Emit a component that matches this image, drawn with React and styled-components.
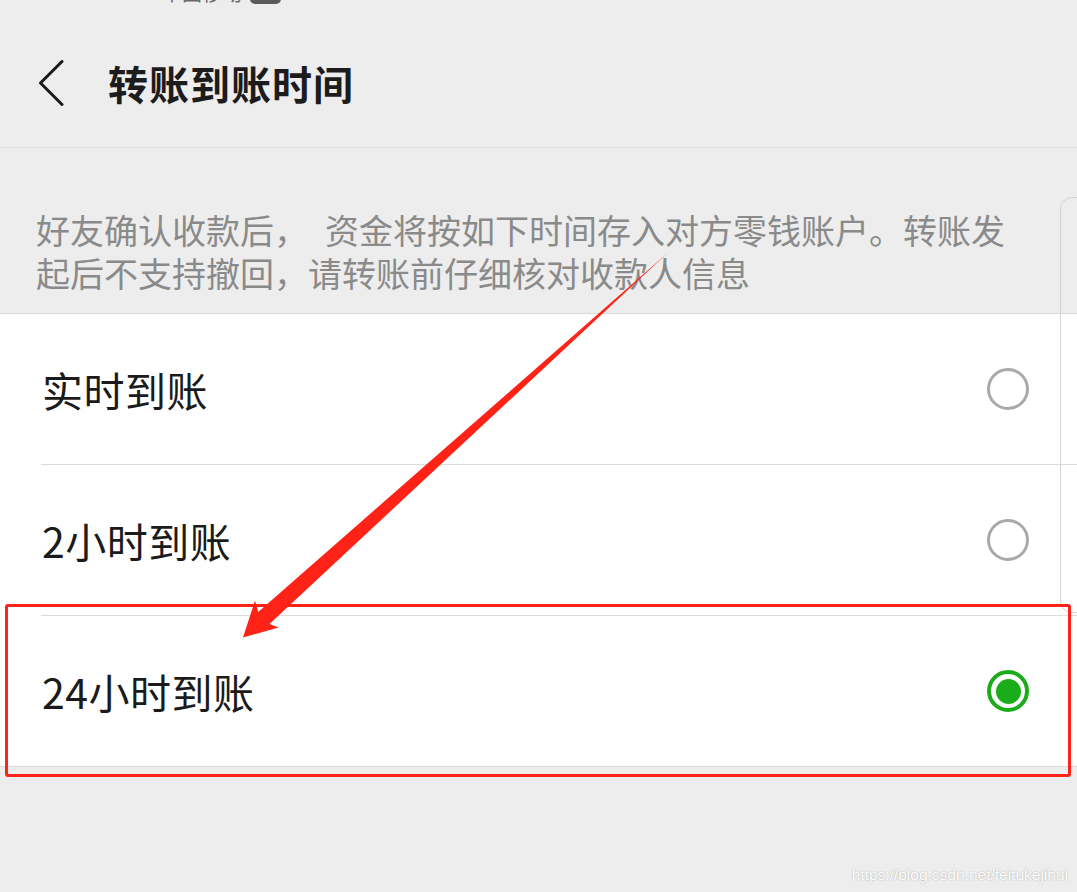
import React from "react";
import styled, { createGlobalStyle } from "styled-components";

const GlobalStyle = createGlobalStyle`
  html, body {
    margin: 0;
    padding: 0;
    background: #ededed;
  }
  * {
    box-sizing: border-box;
  }
`;

const options = [
  { id: "realtime", label: "实时到账", checked: false },
  { id: "2h", label: "2小时到账", checked: false },
  { id: "24h", label: "24小时到账", checked: true },
];

export default function App() {
  return (
    <>
      <GlobalStyle />
      <Page>
        <StatusBar>
          <Carrier>中国移动</Carrier>
          <NetBadge>HD</NetBadge>
          <StatusMark>ᐟ</StatusMark>
        </StatusBar>

        <Header>
          <BackButton aria-label="返回">
            <svg width="26" height="46" viewBox="0 0 26 46">
              <path
                d="M24 1.5 L2.5 23 L24 44.5"
                fill="none"
                stroke="#1a1a1a"
                strokeWidth="3"
                strokeLinecap="round"
                strokeLinejoin="round"
              />
            </svg>
          </BackButton>
          <Title>转账到账时间</Title>
        </Header>

        <Notice>
          好友确认收款后，　资金将按如下时间存入对方零钱账户。转账发起后不支持撤回，请转账前仔细核对收款人信息
        </Notice>

        <OptionList>
          {options.map((item) => (
            <OptionRow key={item.id}>
              <OptionLabel>{item.label}</OptionLabel>
              <Radio $checked={item.checked} />
            </OptionRow>
          ))}
        </OptionList>

        <Footer>
          <Watermark>https://blog.csdn.net/feitukejihui</Watermark>
        </Footer>

        {/* 右侧面板的边缘 */}
        <EdgePanel />

        {/* 标注：红框 + 箭头 */}
        <Highlight />
        <ArrowLayer viewBox="0 0 1077 892" width="1077" height="892">
          <polygon
            points="667,253.5 269.5,624 278.5,627.5 243,637.5 255,600.5 258.2,612"
            fill="#ff2216"
          />
        </ArrowLayer>
      </Page>
    </>
  );
}

const Page = styled.div`
  position: relative;
  width: 1077px;
  min-height: 892px;
  overflow: hidden;
  background: #ededed;
  font-family: "Noto Sans CJK SC", "Noto Sans", sans-serif;
  color: #1a1a1a;
`;

const StatusBar = styled.div`
  height: 6px;
  overflow: hidden;
  display: flex;
  align-items: flex-end;
  gap: 8px;
  padding-left: 162px;
  color: #6a6a6a;
`;

const Carrier = styled.span`
  font-size: 20px;
  line-height: 26px;
  height: 26px;
  flex-shrink: 0;
`;

const NetBadge = styled.span`
  height: 26px;
  width: 31px;
  flex-shrink: 0;
  margin-bottom: 2px;
  border-radius: 5px;
  background: #5a5a5a;
  color: #ededed;
  font-size: 13px;
  line-height: 26px;
  text-align: center;
`;

const StatusMark = styled.span`
  margin-left: 200px;
  font-size: 20px;
  line-height: 26px;
  height: 26px;
  color: #555;
`;

const Header = styled.header`
  height: 142px;
  padding: 13px 0 0 38px;
  display: flex;
  align-items: center;
  gap: 44px;
  border-bottom: 1px solid #dedede;
`;

const BackButton = styled.button`
  display: flex;
  align-items: center;
  padding: 0;
  border: none;
  background: none;
  cursor: pointer;
`;

const Title = styled.h1`
  margin: 0;
  font-size: 40px;
  font-weight: 700;
  letter-spacing: 1px;
  color: #1c1c1c;
`;

const Notice = styled.p`
  margin: 0;
  padding: 60px 70px 19px 36px;
  font-size: 34px;
  line-height: 43px;
  color: #8a8a8a;
  border-bottom: 1px solid #d9d9d9;
`;

const OptionList = styled.div`
  background: #ffffff;
  border-bottom: 1px solid #d9d9d9;
`;

const OptionRow = styled.div`
  height: 151px;
  margin-left: 41px;
  padding: 0 48px 0 1px;
  display: flex;
  align-items: center;
  justify-content: space-between;
  border-bottom: 1px solid #dcdcdc;

  &:last-child {
    height: 150px;
    border-bottom: none;
  }
`;

const OptionLabel = styled.span`
  font-size: 41px;
  color: #1b1b1b;
  letter-spacing: 0.5px;
`;

const Radio = styled.span`
  position: relative;
  width: 42px;
  height: 42px;
  border-radius: 50%;
  border: ${({ $checked }) =>
    $checked ? "4px solid #1aad19" : "3px solid #a9a9a9"};

  &::after {
    content: "";
    display: ${({ $checked }) => ($checked ? "block" : "none")};
    position: absolute;
    left: 50%;
    top: 50%;
    width: 25px;
    height: 25px;
    margin: -12.5px 0 0 -12.5px;
    border-radius: 50%;
    background: #1aad19;
  }
`;

const Footer = styled.footer`
  height: 125px;
  display: flex;
  justify-content: flex-end;
  align-items: flex-end;
  padding: 0 9px 8px 0;
`;

const Watermark = styled.span`
  font-family: "Liberation Sans", Arial, sans-serif;
  font-size: 15.5px;
  color: #ffffff;
  text-shadow: 0 0 1.5px rgba(0, 0, 0, 0.35);
`;

const EdgePanel = styled.div`
  position: absolute;
  left: 1060px;
  top: 197px;
  width: 60px;
  height: 416px;
  border: 1px solid #d3d3d3;
  border-radius: 12px;
  pointer-events: none;
`;

const Highlight = styled.div`
  position: absolute;
  left: 5px;
  top: 604px;
  width: 1066px;
  height: 173px;
  border: 3px solid #ff2216;
  border-radius: 3px;
  pointer-events: none;
`;

const ArrowLayer = styled.svg`
  position: absolute;
  left: 0;
  top: 0;
  pointer-events: none;
`;
